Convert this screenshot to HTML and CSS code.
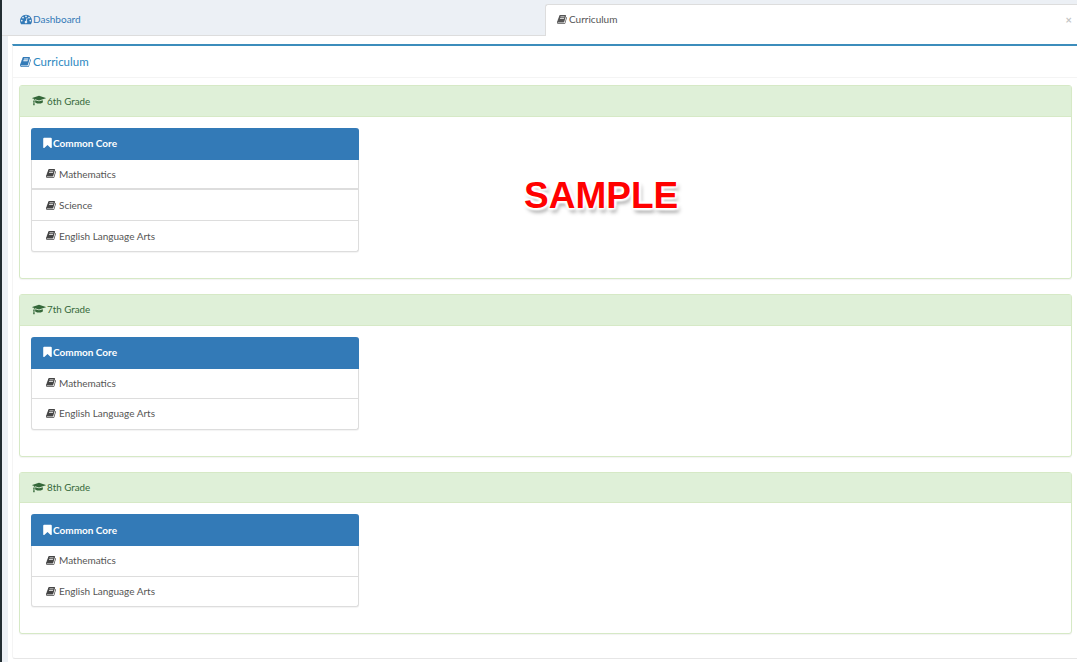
FILE: index.html
```html
<!DOCTYPE html>
<html lang="en">
<head>
<meta charset="utf-8">
<title>Curriculum</title>
<link rel="stylesheet" href="styles.css">
</head>
<body>
<svg class="defs" width="0" height="0" aria-hidden="true">
  <symbol id="i-book" viewBox="0 0 1664 1792">
    <path d="M1639 478q40 57 18 129l-275 906q-19 64-76.500 107.500t-122.500 43.500h-923q-77 0-148.500-53.500t-99.500-131.500q-24-67-2-127 0-4 3-27t4-37q1-8-3-21.500t-3-19.500q2-11 8-21t16.500-23.500 16.500-23.500q23-38 45-91.500t30-91.500q3-10 .5-30t-.5-28q3-11 17-28t17-23q21-36 42-92t25-90q1-9-2.500-32t.5-28q4-13 22-30.500t22-22.500q19-26 42.500-84.500t27.500-96.500q1-8-3-25.500t-2-26.500q2-8 9-18t18-23 17-21q8-12 16.500-30.500t15-35 16-36 19.500-32 26.500-23.500 36-11.500 47.500 5.500l-1 3q38-9 51-9h761q74 0 114 56t18 130l-274 906q-36 119-71.500 153.500t-128.500 34.500h-869q-27 0-38 15-11 16-1 43 24 70 144 70h923q29 0 56-15.500t35-41.500l300-987q7-22 5-57 38 15 59 43zm-1064 2q-4 13 2 22.500t20 9.500h608q13 0 25.500-9.500t16.500-22.500l21-64q4-13-2-22.500t-20-9.500h-608q-13 0-25.500 9.500t-16.500 22.500zm-83 256q-4 13 2 22.500t20 9.500h608q13 0 25.500-9.500t16.500-22.500l21-64q4-13-2-22.500t-20-9.500h-608q-13 0-25.500 9.500t-16.500 22.500z"/>
  </symbol>
  <symbol id="i-cap" viewBox="0 0 2304 1792">
    <path d="M1774 836l18 316q4 69-82 128t-235 93.500-323 34.500-323-34.500-235-93.500-82-128l18-316 574 181q22 7 48 7t48-7zm530-324q0 23-22 31l-1120 352q-4 1-10 1t-10-1l-652-206q-43 34-71 111.500t-34 178.500q63 36 63 109 0 69-58 107l58 433q2 14-8 25-9 11-24 11h-192q-15 0-24-11-10-11-8-25l58-433q-58-38-58-107 0-73 65-111 11-207 98-330l-333-104q-22-8-22-31t22-31l1120-352q4-1 10-1t10 1l1120 352q22 8 22 31z"/>
  </symbol>
  <symbol id="i-mark" viewBox="0 0 1280 1792">
    <path d="M1164 128q23 0 44 9 33 13 52.500 41t19.500 62v1289q0 34-19.500 62t-52.500 41q-19 8-44 8-48 0-83-32l-441-424-441 424q-36 33-83 33-23 0-44-9-33-13-52.500-41t-19.500-62v-1289q0-34 19.500-62t52.500-41q21-9 44-9h1048z"/>
  </symbol>
  <symbol id="i-dash" viewBox="0 0 1792 1792">
    <path d="M384 1152q0-53-37.500-90.500t-90.500-37.500-90.500 37.500-37.500 90.500 37.500 90.500 90.500 37.500 90.500-37.500 37.500-90.500zm192-448q0-53-37.500-90.500t-90.500-37.500-90.500 37.500-37.500 90.500 37.500 90.500 90.500 37.500 90.500-37.500 37.500-90.500zm428 481l101-382q6-26-7.500-48.500t-38.500-29.500-48 6.500-30 39.500l-101 382q-60 5-107 43.500t-63 98.500q-20 77 20 146t117 89 146-20 89-117q16-60-6-117t-72-91zm660-33q0-53-37.500-90.500t-90.500-37.500-90.500 37.500-37.500 90.500 37.500 90.500 90.500 37.500 90.500-37.500 37.500-90.500zm-640-640q0-53-37.500-90.500t-90.500-37.500-90.500 37.500-37.500 90.500 37.500 90.500 90.500 37.500 90.500-37.500 37.500-90.500zm448 192q0-53-37.500-90.500t-90.500-37.500-90.500 37.500-37.500 90.500 37.500 90.500 90.500 37.500 90.500-37.500 37.500-90.500zm320 448q0 261-141 483-19 29-54 29h-1402q-35 0-54-29-141-221-141-483 0-182 71-348t191-286 286-191 348-71 348 71 286 191 191 286 71 348z"/>
  </symbol>
</svg>

<div class="rail"></div>
<main class="page">
  <nav class="tabs">
    <a class="tab tab-inactive"><svg class="ico ico-dash"><use href="#i-dash"/></svg>Dashboard</a>
    <a class="tab tab-active"><svg class="ico ico-book"><use href="#i-book"/></svg>Curriculum<span class="close">×</span></a>
  </nav>

  <section class="box">
    <h1 class="box-title"><svg class="ico ico-title"><use href="#i-book"/></svg>Curriculum</h1>
    <div class="box-body">

      <article class="grade">
        <header class="grade-head"><svg class="ico ico-cap"><use href="#i-cap"/></svg>6th Grade</header>
        <div class="grade-body">
          <div class="standard">
            <div class="standard-head"><svg class="ico ico-mark"><use href="#i-mark"/></svg>Common Core</div>
            <div class="subject subject-thick"><svg class="ico ico-sub"><use href="#i-book"/></svg>Mathematics</div>
            <div class="subject subject-mid"><svg class="ico ico-sub"><use href="#i-book"/></svg>Science</div>
            <div class="subject"><svg class="ico ico-sub"><use href="#i-book"/></svg>English Language Arts</div>
          </div>
        </div>
      </article>

      <article class="grade">
        <header class="grade-head"><svg class="ico ico-cap"><use href="#i-cap"/></svg>7th Grade</header>
        <div class="grade-body">
          <div class="standard">
            <div class="standard-head"><svg class="ico ico-mark"><use href="#i-mark"/></svg>Common Core</div>
            <div class="subject"><svg class="ico ico-sub"><use href="#i-book"/></svg>Mathematics</div>
            <div class="subject"><svg class="ico ico-sub"><use href="#i-book"/></svg>English Language Arts</div>
          </div>
        </div>
      </article>

      <article class="grade">
        <header class="grade-head"><svg class="ico ico-cap"><use href="#i-cap"/></svg>8th Grade</header>
        <div class="grade-body">
          <div class="standard">
            <div class="standard-head"><svg class="ico ico-mark"><use href="#i-mark"/></svg>Common Core</div>
            <div class="subject"><svg class="ico ico-sub"><use href="#i-book"/></svg>Mathematics</div>
            <div class="subject"><svg class="ico ico-sub"><use href="#i-book"/></svg>English Language Arts</div>
          </div>
        </div>
      </article>

    </div>
  </section>
</main>
<div class="stamp">SAMPLE</div>
</body>
</html>
```
FILE: styles.css
```css
* { box-sizing: border-box; }

html, body {
  margin: 0;
  height: 662px;
  overflow: hidden;
}

body {
  display: flex;
  background: #ecf0f5;
  font-family: "Lato", "Liberation Sans", sans-serif;
  font-size: 10px;
  color: #333;
}

.defs { position: absolute; }

.rail {
  width: 2px;
  flex: none;
  background: #222d32;
}

.page {
  flex: 1;
  min-width: 0;
  margin-left: 6px;
  display: flex;
  flex-direction: column;
  background: #fff;
}

.ico {
  fill: currentColor;
  flex: none;
}

.tabs {
  display: flex;
  height: 36px;
  margin-left: -6px;
  background: #ecf0f5;
  flex: none;
}

.tab {
  display: flex;
  align-items: center;
  font-size: 10px;
}

.tab-inactive {
  width: 543px;
  padding: 2px 0 0 18px;
  color: #337ab7;
  border-bottom: 1px solid #ddd;
}

.tab-active {
  position: relative;
  flex: 1;
  margin-top: 4px;
  padding: 0 0 3px 11px;
  background: #fff;
  color: #555;
  border: 1px solid #ddd;
  border-bottom: 0;
  border-right: 0;
  border-top-left-radius: 3px;
}

.ico-dash { width: 12px; height: 12px; margin-right: 1px; }
.ico-book { width: 10px; height: 11px; margin-right: 2px; }

.close {
  position: absolute;
  right: 5px;
  top: 9px;
  font-size: 11px;
  line-height: 11px;
  font-weight: 700;
  color: #c4c4c4;
}

.box {
  flex: 1;
  margin: 8px 0 3px 4px;
  display: flex;
  flex-direction: column;
  background: #fff;
  border-top: 2px solid #3c8dbc;
  border-bottom: 1px solid #e6e6e6;
  border-left: 1px solid #f4f4f4;
  border-radius: 0 0 0 3px;
}

.box-title {
  display: flex;
  align-items: center;
  height: 32px;
  margin: 0;
  padding: 0 0 0 7px;
  font-size: 11.500px;
  font-weight: 400;
  color: #2c88bf;
  border-bottom: 1px solid #f4f4f4;
  flex: none;
}

.ico-title { width: 11px; height: 12px; margin-right: 2px; color: #337ab7; }

.box-body {
  padding: 7px 5px 0 6px;
}

.grade {
  margin-bottom: 15.260px;
  background: #fff;
  border: 1px solid #d6e9c6;
  border-radius: 3px;
  box-shadow: 0 1px 1px rgba(0, 0, 0, .05);
}

.grade:first-child { margin-bottom: 15.450px; }

.grade-head {
  display: flex;
  align-items: center;
  height: 30.550px;
  padding: 0 0 1px 12px;
  background: #dff0d8;
  color: #35683a;
  font-size: 9.800px;
  border-bottom: 1px solid #d6e9c6;
}

.grade:first-child .grade-head { padding-bottom: 0; }

.ico-cap { width: 14px; height: 11px; margin-right: 1px; }

.grade-body {
  padding: 11px 11px 25.960px;
}

.standard {
  width: 328px;
  background: #fff;
  border: 1px solid #ddd;
  border-top: 0;
  border-radius: 3px;
  box-shadow: 0 1px 1px rgba(0, 0, 0, .05);
}

.standard-head {
  display: flex;
  align-items: center;
  height: 31.960px;
  margin: 0 -1px;
  padding: 0 0 1px 12px;
  background: #337ab7;
  color: #fff;
  font-weight: 700;
  border-radius: 3px 3px 0 0;
}

.ico-mark { width: 9px; height: 12px; margin-right: 1px; }

.subject {
  display: flex;
  align-items: center;
  height: 30.600px;
  padding: 0 0 1px 14px;
  color: #555;
  border-bottom: 1px solid #ddd;
}

.subject:last-child {
  height: 29.500px;
  border-bottom: 0;
}

.grade:first-child .subject { padding-bottom: 0; }
.grade:last-child .subject:not(:last-child) { padding-bottom: 2px; }

.subject-thick { border-bottom-width: 2px; }
.subject-mid { height: 31.030px; }

.ico-sub { width: 10px; height: 11px; margin-right: 3px; color: #444; }

.stamp {
  position: absolute;
  left: 524px;
  top: 174px;
  font-family: "Liberation Sans", sans-serif;
  font-size: 37px;
  line-height: 43px;
  font-weight: 700;
  color: #f00;
  text-shadow: 1px 1px 2px #fff, -2px -2px 2px #fff, 2px -2px 2px #fff, -2px 2px 2px #fff, 2px 2px 3px #fff, 2px 4px 4px rgba(0, 0, 0, .45);
}
```
